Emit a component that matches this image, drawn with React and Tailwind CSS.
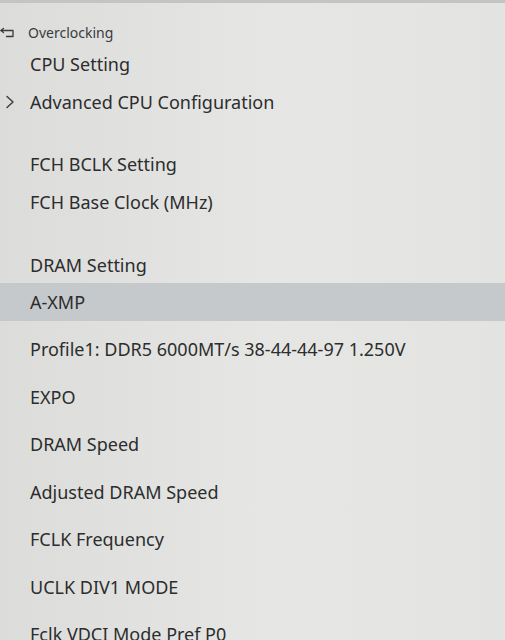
import React from "react";

function BackIcon() {
  return (
    <svg width="15" height="12" viewBox="0 0 15 12" fill="none" stroke="#3a3b3b" strokeWidth="1.3" strokeLinecap="round" strokeLinejoin="round">
      <path d="M3.5 1.5 L1 3.5 L3.5 5.5" />
      <path d="M1 3.5 H13 V9.5 H6.5" />
    </svg>
  );
}

function Chevron() {
  return (
    <svg width="10" height="14" viewBox="0 0 10 14" fill="none" stroke="#3a3b3b" strokeWidth="1.4" strokeLinecap="round" strokeLinejoin="round">
      <path d="M2 1.5 L8 7 L2 12.5" />
    </svg>
  );
}

function Row({ h, children, highlight, chevron }) {
  return (
    <div className={`relative shrink-0 flex items-center pl-[30px] ${h} ${highlight ? "bg-[#c6c9cc]" : ""}`}>
      {chevron && (
        <span className="absolute left-[5px] top-1/2 -translate-y-1/2">
          <Chevron />
        </span>
      )}
      <span className="text-[18px] text-[#2c2d2d] whitespace-nowrap">{children}</span>
    </div>
  );
}

const lowerItems = [
  "Profile1: DDR5 6000MT/s 38-44-44-97 1.250V",
  "EXPO",
  "DRAM Speed",
  "Adjusted DRAM Speed",
  "FCLK Frequency",
  "UCLK DIV1 MODE",
  "Fclk VDCI Mode Pref P0",
];

export default function App() {
  return (
    <div
      className="w-[505px] h-[640px] overflow-hidden bg-[linear-gradient(90deg,#dcdddb_0%,#e6e7e5_55%,#e3e4e2_100%)] flex flex-col"
      style={{ fontFamily: '"Noto Sans", "Open Sans", sans-serif' }}
    >
      <div className="h-[3px] shrink-0 bg-[#c3c5c5]" />
      <div className="h-[17px] shrink-0" />
      <div className="h-[25px] shrink-0 flex items-center gap-[13px]">
        <BackIcon />
        <span className="text-[14px] text-[#3a3b3b]">Overclocking</span>
      </div>
      <Row h="h-[38px]">CPU Setting</Row>
      <Row h="h-[38px]" chevron>Advanced CPU Configuration</Row>
      <div className="h-[25px] shrink-0" />
      <Row h="h-[37px]">FCH BCLK Setting</Row>
      <Row h="h-[38px]">FCH Base Clock (MHz)</Row>
      <div className="h-[26px] shrink-0" />
      <Row h="h-[36px]">DRAM Setting</Row>
      <Row h="h-[38px]" highlight>A-XMP</Row>
      <div className="h-[5px] shrink-0" />
      {lowerItems.map((t) => (
        <Row key={t} h="h-[47.5px]">{t}</Row>
      ))}
    </div>
  );
}
